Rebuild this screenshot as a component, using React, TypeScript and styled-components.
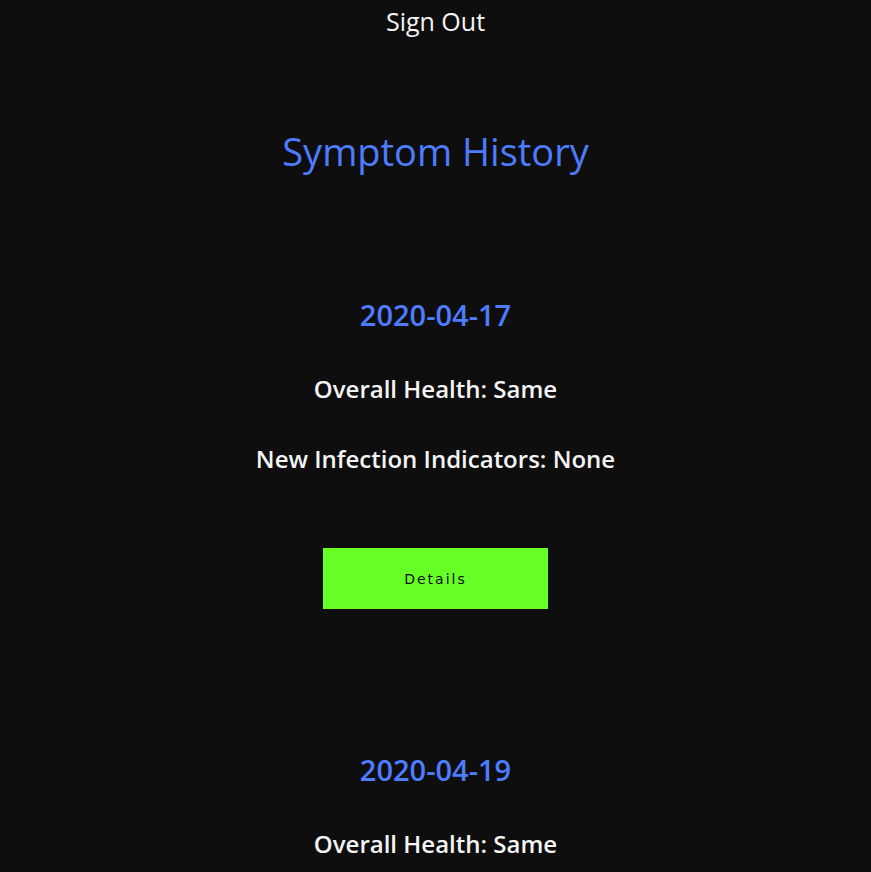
import React from "react";
import styled, { createGlobalStyle } from "styled-components";

const Global = createGlobalStyle`
  html, body { margin: 0; padding: 0; background: #0e0e0e; }
  body { font-family: "Open Sans", "Noto Sans", sans-serif; color: #fff; }
`;

const Page = styled.div`
  display: flex;
  flex-direction: column;
  align-items: center;
  min-height: 872px;
  background: #0e0e0e;
`;

const SignOut = styled.button`
  margin-top: 4px;
  background: none;
  border: none;
  padding: 0;
  color: #f4f4f4;
  font-family: "Open Sans", sans-serif;
  font-size: 25px;
  line-height: normal;
  font-weight: 400;
  cursor: pointer;
`;

const Title = styled.h1`
  margin: 87px 0 0;
  color: #4d7cff;
  font-size: 38px;
  font-weight: 500;
  line-height: normal;
`;

const List = styled.div`
  display: flex;
  flex-direction: column;
  align-items: center;
  margin-top: 118px;
  gap: 141px;
`;

const Entry = styled.section`
  display: flex;
  flex-direction: column;
  align-items: center;
`;

const DateHeading = styled.h2`
  margin: 0;
  color: #4d7cff;
  font-size: 29px;
  font-weight: 600;
  line-height: normal;
`;

const Line = styled.p<{ $gap: number }>`
  margin: ${(p) => p.$gap}px 0 0;
  color: #f4f4f4;
  font-size: 24px;
  font-weight: 600;
  line-height: normal;
`;

const DetailsButton = styled.button`
  margin-top: 73px;
  width: 225px;
  height: 61px;
  border: none;
  background: #66ff26;
  color: #0a0a0a;
  font-family: "DejaVu Sans", sans-serif;
  font-size: 14px;
  letter-spacing: 2px;
  cursor: pointer;
`;

const entries = [
  { date: "2020-04-17", health: "Same", indicators: "None" },
  { date: "2020-04-19", health: "Same", indicators: "None" },
];

export default function App() {
  return (
    <Page>
      <Global />
      <SignOut>Sign Out</SignOut>
      <Title>Symptom History</Title>
      <List>
        {entries.map((e) => (
          <Entry key={e.date}>
            <DateHeading>{e.date}</DateHeading>
            <Line $gap={38}>Overall Health: {e.health}</Line>
            <Line $gap={37}>New Infection Indicators: {e.indicators}</Line>
            <DetailsButton>Details</DetailsButton>
          </Entry>
        ))}
      </List>
    </Page>
  );
}
